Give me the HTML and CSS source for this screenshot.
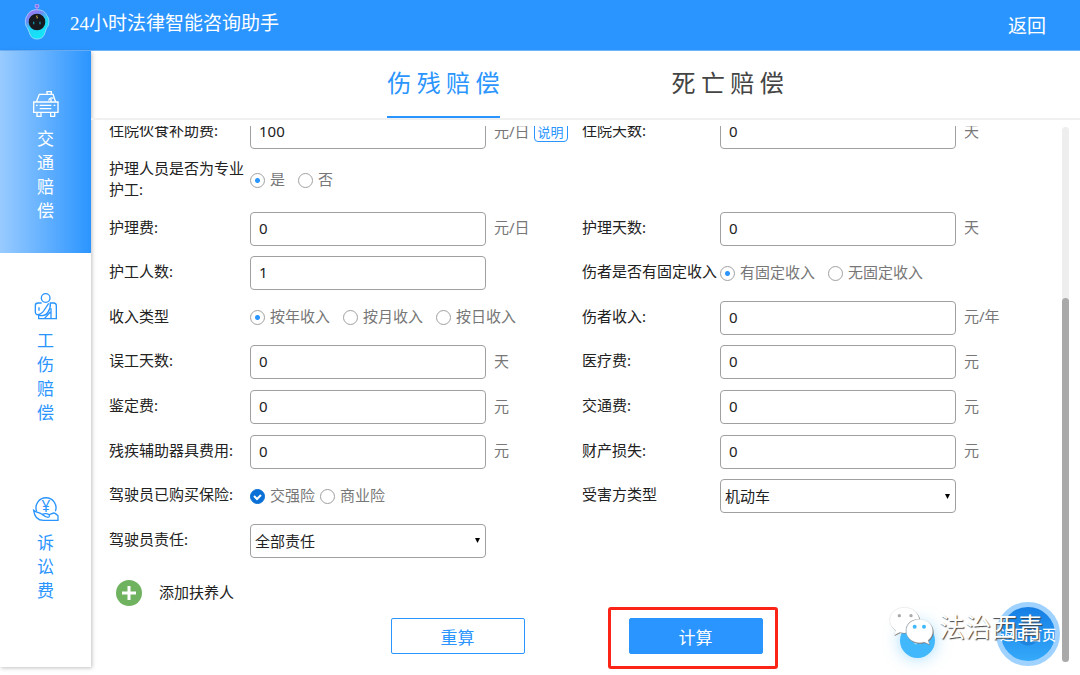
FILE: index.html
```
<!DOCTYPE html>
<html lang="zh-CN">

<head>
    <meta charset="utf-8">
    <meta name="viewport" content="width=device-width, initial-scale=1">
    <title>24小时法律智能咨询助手</title>
    <link rel="stylesheet" href="styles.css">
</head>

<body>
    <header class="topbar">
        <svg class="robot" viewBox="0 0 78 108" aria-hidden="true">
            <defs>
                <linearGradient id="shell" x1="0" y1="0" x2="0.5" y2="1">
                    <stop offset="0" stop-color="#c06bf0"/>
                    <stop offset="0.35" stop-color="#6f8cf5"/>
                    <stop offset="0.6" stop-color="#22d3f5"/>
                    <stop offset="1" stop-color="#12e6f8"/>
                </linearGradient>
            </defs>
            <path d="M39 20V7" stroke="#8d62e0" stroke-width="6"/>
            <circle cx="39" cy="6" r="6" fill="#8a6be8" stroke="#c9c4ff" stroke-width="2"/>
            <path d="M39 17C55 17 66 25 69 36C76 40 77 64 69 70C66 76 65 80 63 86C59 100 50 105 39 105C28 105 20 100 16 86C14 80 12 76 9 70C2 64 3 40 9 36C13 25 23 17 39 17Z" fill="url(#shell)" stroke="#b9e6ff" stroke-width="2"/>
            <circle cx="39" cy="54" r="25" fill="#161a20"/>
            <path d="M39 34l-2 5h4l-2 5" fill="none" stroke="#e8c34a" stroke-width="2"/>
            <path d="M29 53v8M48 53v8" stroke="#128fa0" stroke-width="4"/>
        </svg>
        <h1 class="app-name"><span class="num">24</span>小时法律智能咨询助手</h1>
        <a class="back" href="#">返回</a>
    </header>

    <div class="page">
        <nav class="sidebar">
            <a class="side-item active" href="#">
                <svg class="side-icon" viewBox="0 0 78 78" aria-hidden="true">
                    <path d="M2 33h73v31H2zM10 33l9-23h41l8 23M42 9V2h13v8M12 65v11h12V65M53 65v11h12V65M20 43h35M20 53h35M9 43h5M62 43h5M47 29c2-9 10-9 14-7M54 24v8"/>
                </svg>
                <span class="side-name">交通赔偿</span>
            </a>
            <a class="side-item" href="#">
                <svg class="side-icon" viewBox="0 0 78 78" aria-hidden="true">
                    <circle cx="38" cy="15" r="13"/>
                    <path d="M26 30H15c-5 0-8 3-8 8v20c0 4 2 7 6 8M50 30h12c5 0 8 4 8 9v38H17V66c12 4 22 1 27-7c6-9 9-18 8-28M13 65c9-1 16-6 21-14l13-20M54 76V46M18 43v10M34 77l18-20"/>
                </svg>
                <span class="side-name">工伤赔偿</span>
            </a>
            <a class="side-item" href="#">
                <svg class="side-icon" viewBox="0 0 78 78" aria-hidden="true">
                    <path d="M11 49a30 30 0 1 1 56 0"/>
                    <text x="39" y="50" text-anchor="middle">¥</text>
                    <path d="M2 46c2 17 11 30 29 30h44V62c-4-4-9-9-13-8L48 59c3 3 1 8-3 8c-8 0-13-5-18-9C19 52 11 54 2 46zM27 58c8-3 15-4 21 1"/>
                </svg>
                <span class="side-name">诉讼费</span>
            </a>
        </nav>

        <main class="main">
            <div class="tabs">
                <button type="button" class="tab active">伤 残 赔 偿</button>
                <button type="button" class="tab">死 亡 赔 偿</button>
            </div>

            <div class="scroll-area">
                <form class="sheet">
                    <div class="fields">
                        <label class="name" for="food">住院伙食补助费:</label>
                        <div class="control">
                            <input class="box" type="text" id="food" value="100">
                            <span class="unit">元/日</span>
                            <button type="button" class="tip">说明</button>
                        </div>
                        <label class="name" for="hospital-days">住院天数:</label>
                        <div class="control">
                            <input class="box" type="text" id="hospital-days" value="0">
                            <span class="unit">天</span>
                        </div>

                        <span class="name" id="pro-nurse">护理人员是否为专业护工:</span>
                        <div class="control wide" role="radiogroup" aria-labelledby="pro-nurse">
                            <label class="choice"><input type="radio" name="nurse" checked><span>是</span></label>
                            <label class="choice"><input type="radio" name="nurse"><span>否</span></label>
                        </div>

                        <label class="name" for="care-fee">护理费:</label>
                        <div class="control">
                            <input class="box" type="text" id="care-fee" value="0">
                            <span class="unit">元/日</span>
                        </div>
                        <label class="name" for="care-days">护理天数:</label>
                        <div class="control">
                            <input class="box" type="text" id="care-days" value="0">
                            <span class="unit">天</span>
                        </div>

                        <label class="name" for="nurses">护工人数:</label>
                        <div class="control">
                            <input class="box" type="text" id="nurses" value="1">
                        </div>
                        <span class="name" id="fixed-income">伤者是否有固定收入</span>
                        <div class="control" role="radiogroup" aria-labelledby="fixed-income">
                            <label class="choice"><input type="radio" name="fixed" checked><span>有固定收入</span></label>
                            <label class="choice"><input type="radio" name="fixed"><span>无固定收入</span></label>
                        </div>

                        <span class="name" id="income-type">收入类型</span>
                        <div class="control" role="radiogroup" aria-labelledby="income-type">
                            <label class="choice"><input type="radio" name="income" checked><span>按年收入</span></label>
                            <label class="choice"><input type="radio" name="income"><span>按月收入</span></label>
                            <label class="choice"><input type="radio" name="income"><span>按日收入</span></label>
                        </div>
                        <label class="name" for="income">伤者收入:</label>
                        <div class="control">
                            <input class="box" type="text" id="income" value="0">
                            <span class="unit">元/年</span>
                        </div>

                        <label class="name" for="lost-days">误工天数:</label>
                        <div class="control">
                            <input class="box" type="text" id="lost-days" value="0">
                            <span class="unit">天</span>
                        </div>
                        <label class="name" for="medical">医疗费:</label>
                        <div class="control">
                            <input class="box" type="text" id="medical" value="0">
                            <span class="unit">元</span>
                        </div>

                        <label class="name" for="appraisal">鉴定费:</label>
                        <div class="control">
                            <input class="box" type="text" id="appraisal" value="0">
                            <span class="unit">元</span>
                        </div>
                        <label class="name" for="travel">交通费:</label>
                        <div class="control">
                            <input class="box" type="text" id="travel" value="0">
                            <span class="unit">元</span>
                        </div>

                        <label class="name" for="device">残疾辅助器具费用:</label>
                        <div class="control">
                            <input class="box" type="text" id="device" value="0">
                            <span class="unit">元</span>
                        </div>
                        <label class="name" for="property">财产损失:</label>
                        <div class="control">
                            <input class="box" type="text" id="property" value="0">
                            <span class="unit">元</span>
                        </div>

                        <span class="name" id="insurance">驾驶员已购买保险:</span>
                        <div class="control tight" role="group" aria-labelledby="insurance">
                            <label class="choice"><input type="checkbox" checked><span>交强险</span></label>
                            <label class="choice"><input type="checkbox"><span>商业险</span></label>
                        </div>
                        <label class="name" for="victim">受害方类型</label>
                        <div class="control">
                            <select class="box" id="victim">
                                <option>机动车</option>
                            </select>
                        </div>

                        <label class="name" for="duty">驾驶员责任:</label>
                        <div class="control wide">
                            <select class="box" id="duty">
                                <option>全部责任</option>
                            </select>
                        </div>
                    </div>

                    <button type="button" class="add">
                        <svg class="add-icon" viewBox="0 0 26 26" aria-hidden="true">
                            <circle cx="13" cy="13" r="13" fill="#6fb25f"/>
                            <path d="M13 6v14M6 13h14" stroke="#fff" stroke-width="3"/>
                        </svg>
                        <span>添加扶养人</span>
                    </button>

                    <div class="actions">
                        <button type="reset" class="btn">重算</button>
                        <div class="marked">
                            <button type="button" class="btn primary">计算</button>
                        </div>
                    </div>
                </form>
                <div class="scrollbar">
                    <div class="thumb"></div>
                </div>
            </div>
        </main>
    </div>

    <button type="button" class="float-voice" aria-label="语音">
        <svg viewBox="0 0 20 20" aria-hidden="true">
            <path d="M3 7h4l6-4v13l-6-4H3zM15 7l2 3-2 3M6 12v4h3"/>
        </svg>
    </button>
    <a class="float-home" href="#">返回首页</a>
    <div class="watermark">
        <svg class="wechat" viewBox="0 0 132 114" aria-hidden="true">
            <path class="shade" d="M46 4C21 4 4 20 4 41c0 13 7 24 18 31l-5 15 18-9c6 2 12 2 18 1C48 56 65 38 94 39C90 18 70 4 46 4z"/>
            <path class="bubble" d="M46 1C21 1 2 18 2 39c0 13 7 24 18 31l-5 15 18-9c6 2 12 2 18 1C47 55 64 36 91 37C88 16 70 1 46 1z"/>
            <path class="shade" d="M94 40c-23 0-41 15-41 35s18 35 41 35c5 0 10-1 14-2l15 7-4-12c9-7 15-16 15-28c0-20-18-35-40-35z"/>
            <path class="bubble" d="M92 37c-23 0-40 15-40 35s17 35 40 35c5 0 10-1 14-2l15 7-4-12c9-7 14-16 14-28c0-20-17-35-39-35z"/>
            <circle class="eye" cx="31" cy="26" r="5"/>
            <circle class="eye" cx="66" cy="26" r="5"/>
            <circle class="eye blue" cx="77" cy="59" r="6"/>
            <circle class="eye blue" cx="105" cy="59" r="6"/>
        </svg>
        <span>法治西青</span>
    </div>
</body>

</html>
```
FILE: styles.css
```
* {
    box-sizing: border-box;
}

body {
    margin: 0;
    height: 100vh;
    display: flex;
    flex-direction: column;
    overflow: hidden;
    font-family: "Noto Sans", "Noto Sans CJK SC", sans-serif;
    font-size: 15px;
    color: #222;
    background-color: #fff;
}

button,
input,
select {
    font-family: inherit;
    font-size: inherit;
}

button {
    padding: 0;
    border: 0;
    background: none;
    cursor: pointer;
}

a {
    text-decoration: none;
}

/* top bar */
.topbar {
    flex: none;
    display: flex;
    align-items: center;
    height: 51px;
    padding: 0 34px 6px 24px;
    color: #fff;
    background-color: #2b95ff;
    border-bottom: 1px solid #6fb6ff;
}

.robot {
    width: 26px;
    height: 36px;
}

.app-name {
    flex: 1;
    margin: 0 0 0 20px;
    padding-top: 2px;
    font-size: 19px;
    font-weight: 400;
    line-height: 24px;
    font-family: "Noto Sans CJK SC", sans-serif;
}

.app-name .num {
    font-family: "Liberation Serif", serif;
}

.back {
    padding-top: 6px;
    font-size: 19px;
    color: #fff;
}

.page {
    flex: 1;
    min-height: 0;
    display: flex;
}

/* left menu */
.sidebar {
    flex: none;
    width: 91px;
    margin-bottom: 8px;
    box-shadow: 1px 1px 4px rgba(0, 0, 0, 0.25);
}

.side-item {
    display: flex;
    flex-direction: column;
    align-items: center;
    gap: 9px;
    height: 202px;
    padding-top: 40px;
    color: #2b95ff;
}

.side-item.active {
    color: #fff;
    background-image: linear-gradient(to right, #99cbff, #2b95ff);
}

.side-icon {
    flex: none;
    width: 26px;
    height: 26px;
    overflow: visible;
    fill: none;
    stroke: currentColor;
    stroke-width: 4;
}

.side-icon text {
    font-size: 46px;
    fill: currentColor;
    stroke: none;
}

.side-name {
    width: 17px;
    font-size: 17px;
    line-height: 24px;
    font-family: "Noto Sans CJK SC", sans-serif;
    word-break: break-all;
}

/* tabs */
.main {
    flex: 1;
    min-width: 0;
    display: flex;
    flex-direction: column;
}

.tabs {
    flex: none;
    display: flex;
    justify-content: center;
    gap: 172px;
    height: 69px;
    border-bottom: 2px solid #f0f0f0;
}

.tab {
    padding-bottom: 4px;
    font-family: "Noto Sans CJK SC", sans-serif;
    font-size: 24px;
    color: #444;
    border-bottom: 2px solid transparent;
}

.tab.active {
    color: #2b95ff;
    border-bottom-color: #2b95ff;
}

/* form */
.scroll-area {
    flex: 1;
    min-height: 0;
    display: flex;
    margin-top: 6px;
    overflow: hidden;
}

.sheet {
    flex: 1;
    display: flex;
    flex-direction: column;
    margin-top: -16px;
    padding-bottom: 21px;
}

.fields {
    flex: 1;
    display: grid;
    grid-template-columns: 141fr 332fr 138fr 332fr;
    grid-template-rows: 1fr 52px repeat(8, 1fr);
    align-items: center;
    padding: 0 10px 0 18px;
}

.name {
    line-height: 21px;
    padding-bottom: 3px;
}

.control {
    display: flex;
    align-items: center;
    white-space: nowrap;
    color: #777;
}

.wide {
    grid-column: 2 / 5;
}

.box {
    width: 236px;
    height: 34px;
    padding: 0 8px 2px;
    color: #222;
    background-color: #fff;
    border: 1px solid #a0a0a0;
    border-radius: 4px;
}

select.box {
    appearance: none;
    padding: 0 4px;
    background-image: url("data:image/svg+xml,%3Csvg xmlns='http://www.w3.org/2000/svg' viewBox='0 0 6 6'%3E%3Cpath d='M0 0h6L3 6z'/%3E%3C/svg%3E");
    background-repeat: no-repeat;
    background-position: right 5px center;
    background-size: 5px 5px;
}

.unit {
    margin-left: 8px;
    padding-bottom: 4px;
}

.tip {
    height: 20px;
    margin-left: 4px;
    padding: 0 3px;
    font-size: 13px;
    line-height: 16px;
    color: #2b95ff;
    border: 1px solid #2b95ff;
    border-radius: 4px;
}

.choice {
    display: flex;
    align-items: center;
    gap: 5px;
    margin-right: 13px;
}

.choice span,
.add span {
    padding-bottom: 4px;
}

.tight .choice {
    margin-right: 5px;
}

.choice input {
    appearance: none;
    width: 15px;
    height: 15px;
    margin: 0;
    background-color: #fff;
    border: 1px solid #a0a0a0;
    border-radius: 50%;
}

.choice input[type="radio"]:checked {
    background-image: radial-gradient(circle, #2b95ff 2px, transparent 3px);
}

.choice input[type="checkbox"]:checked {
    border-color: #0a70d6;
    background: #0a70d6 url("data:image/svg+xml,%3Csvg xmlns='http://www.w3.org/2000/svg' viewBox='0 0 13 13'%3E%3Cpath d='M3 6l3 3 4-4' fill='none' stroke='white' stroke-width='2'/%3E%3C/svg%3E") center;
}

.add {
    align-self: flex-start;
    display: flex;
    align-items: center;
    gap: 17px;
    height: 55px;
    padding: 5px 0 0 25px;
    color: #222;
}

.add-icon {
    width: 26px;
    height: 26px;
}

.actions {
    display: flex;
    justify-content: center;
    gap: 104px;
}

.btn {
    display: block;
    width: 134px;
    height: 36px;
    font-size: 17px;
    color: #2b95ff;
    border: 1px solid #2b95ff;
    border-radius: 2px;
}

.btn.primary {
    color: #fff;
    background-color: #2b95ff;
}

.marked {
    position: relative;
}

/* red frame round the calculate button */
.marked::after {
    content: "";
    position: absolute;
    inset: -11px -15px -15px -21px;
    border: 3px solid #fb2416;
    border-radius: 3px;
    pointer-events: none;
}

.scrollbar {
    flex: none;
    display: flex;
    align-items: flex-end;
    width: 7px;
    margin: 1px 11px 13px 0;
    background-color: #eee;
    border-radius: 4px;
}

.thumb {
    width: 100%;
    height: 68%;
    background-color: #a9a9a9;
    border-radius: 4px;
}

/* things floating over the page */
.float-voice,
.float-home,
.watermark {
    position: absolute;
}

.float-voice {
    right: 145px;
    bottom: 17px;
    width: 35px;
    height: 35px;
    border-radius: 50%;
    background-color: #42b8fc;
    box-shadow: 0 0 16px rgba(66, 184, 252, 0.5);
}

.float-voice svg {
    width: 16px;
    height: 16px;
    fill: none;
    stroke: #bfe7ff;
}

.float-home {
    right: 20px;
    bottom: 9px;
    display: flex;
    align-items: center;
    justify-content: center;
    width: 64px;
    height: 64px;
    font-size: 14px;
    font-weight: 500;
    white-space: nowrap;
    color: #fff;
    border: 5px solid #9fd2ff;
    border-radius: 50%;
    background-image: radial-gradient(circle, rgba(20, 110, 200, 0.5) 11px, transparent 12px), linear-gradient(#157ee4, #35a9fa);
}

.watermark {
    right: 37px;
    bottom: 29px;
    display: flex;
    align-items: center;
    gap: 6px;
    font-family: "Noto Sans CJK SC", sans-serif;
    font-size: 26px;
    line-height: 40px;
    color: #fff;
    text-shadow: 1px 1px 1px #444;
    pointer-events: none;
}

.wechat {
    width: 44px;
    height: 38px;
    overflow: visible;
}

.wechat .bubble {
    fill: #fff;
    stroke: #ccc;
    stroke-width: 1;
}

.wechat .shade {
    fill: #777;
}

.wechat .eye {
    fill: #aaa;
}

.wechat .eye.blue {
    fill: #42b8fc;
}
```
